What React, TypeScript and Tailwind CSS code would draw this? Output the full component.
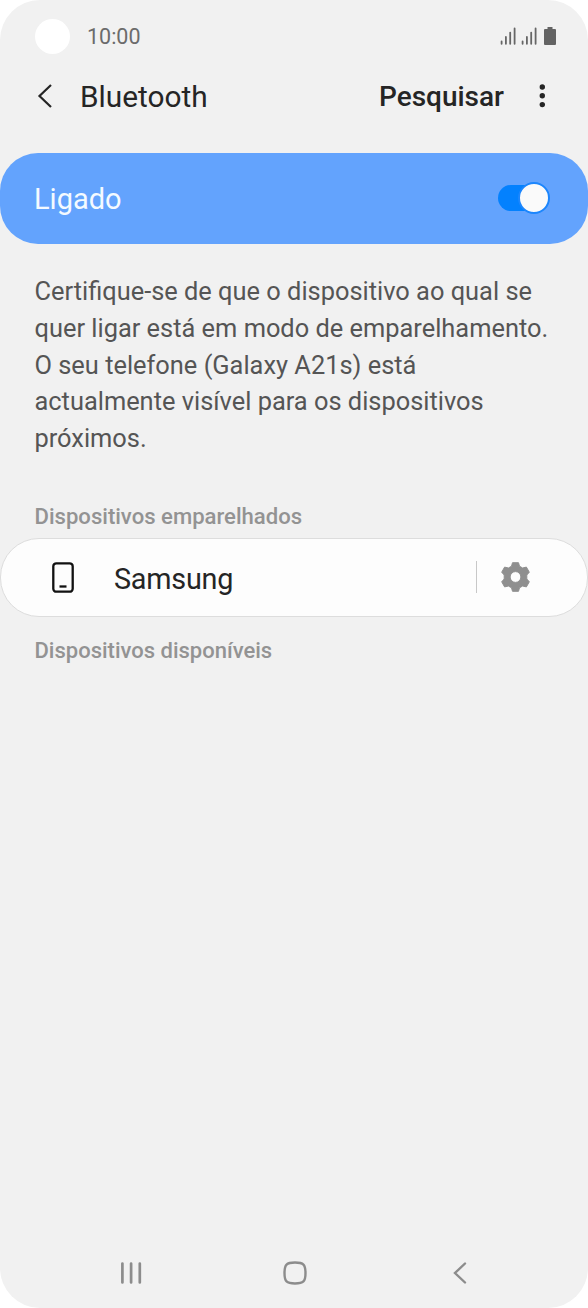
function Signal() {
  return (
    <svg width="16" height="18" viewBox="0 0 16 18" fill="none" stroke="#666666" strokeWidth="1.8" strokeLinecap="round">
      <path d="M1.6 14.5V16.8M5.9 10V16.8M10.2 5.6V16.8M14.6 1.4V16.8" />
    </svg>
  );
}

function StatusBar() {
  return (
    <div className="flex h-[72px] items-center pl-[35px] pr-[32px]">
      <div className="size-[35px] rounded-full bg-white" />
      <span className="ml-[17px] mt-[2px] text-[21.5px] leading-none text-[#6b6b6b]">10:00</span>

      <div className="ml-auto flex items-center gap-[5px]">
        <Signal />
        <Signal />
        <svg className="ml-[2px]" width="12" height="18" viewBox="0 0 12 18" fill="#636363">
          <path d="M3.5 0h5v2H11a1 1 0 0 1 1 1v14a1 1 0 0 1-1 1H1a1 1 0 0 1-1-1V3a1 1 0 0 1 1-1h2.5z" />
        </svg>
      </div>
    </div>
  );
}

function Header() {
  return (
    <div className="flex h-[48px] items-center pl-[37px] pr-[42px] text-[#252525]">
      <svg width="16" height="24" viewBox="0 0 16 24" fill="none" stroke="currentColor" strokeWidth="2.2">
        <path d="M14 1L2.5 12L14 23" />
      </svg>
      <h1 className="ml-[27px] mt-[2px] text-[29.8px] leading-none">Bluetooth</h1>
      <span className="ml-auto mt-[2px] text-[28px] font-medium leading-none">Pesquisar</span>
      <svg className="ml-[34px]" width="8" height="24" viewBox="0 0 8 24" fill="currentColor">
        <circle cx="4.3" cy="3" r="2.7" />
        <circle cx="4.3" cy="11.8" r="2.7" />
        <circle cx="4.3" cy="20.6" r="2.7" />
      </svg>
    </div>
  );
}

function Toggle() {
  return (
    <div className="relative mr-[38px] h-[32px] w-[52px]">
      <div className="absolute left-0 top-[2px] h-[26px] w-[46px] rounded-full bg-[#0381fe]" />
      <div className="absolute right-0 -top-px size-[32px] rounded-full border-2 border-[#1c86fd] bg-[#fafafa]" />
    </div>
  );
}

function Gear() {
  return (
    <svg className="ml-[24px]" width="29" height="30" viewBox="0 0 29 30" fill="#8f8f8f" stroke="#8f8f8f" strokeLinejoin="round">
      <path
        fillRule="evenodd"
        d="M11.5 0.7H17.5L18.5 4.2L21.6 6L25.4 5.1L28.3 10.2L25.8 13V17L28.3 19.8L25.4 24.9L21.6 24L18.5 25.8L17.5 29.3H11.5L10.5 25.8L7.4 24L3.6 24.9L0.7 19.8L3.2 17V13L0.7 10.2L3.6 5.1L7.4 6L10.5 4.2ZM14.5 9.6A5.4 5.4 0 1 0 14.5 20.4A5.4 5.4 0 1 0 14.5 9.6Z"
      />
    </svg>
  );
}

function NavBar() {
  return (
    <div className="mt-auto flex h-[70px] items-center justify-between pl-[120px] pr-[120px] text-[#8c8c8c]">
      <svg width="22" height="24" viewBox="0 0 22 24" fill="none" stroke="currentColor" strokeWidth="2.7" strokeLinecap="round">
        <path d="M2.4 2.5V21.5M11.1 2.5V21.5M19.8 2.5V21.5" />
      </svg>
      <svg className="-ml-[4px]" width="24" height="24" viewBox="0 0 24 24" fill="none" stroke="currentColor" strokeWidth="2.4">
        <path d="M12 1.5C20.5 1.5 22.5 3.5 22.5 12S20.5 22.5 12 22.5S1.5 20.5 1.5 12S3.5 1.5 12 1.5Z" />
      </svg>
      <svg width="16" height="24" viewBox="0 0 16 24" fill="none" stroke="currentColor" strokeWidth="2.4" strokeLinecap="round">
        <path d="M13 2.5L3 12L13 21.5" />
      </svg>
    </div>
  );
}

export default function App() {
  return (
    <div className="min-h-screen bg-white">
      <div className="flex h-[1308px] w-[588px] flex-col overflow-hidden rounded-[40px] bg-[#f1f1f1] font-['Roboto',sans-serif]">
        <StatusBar />
        <Header />

        {/* Bluetooth switch */}
        <div className="mt-[33px] flex h-[91px] items-center justify-between rounded-[38px] bg-[#63a3fd] pl-[34px]">
          <span className="mt-[2px] text-[29px] leading-none text-[#f4faff]">Ligado</span>
          <Toggle />
        </div>

        <p className="mt-[29px] whitespace-nowrap pl-[34.5px] text-[25.4px] leading-[36.8px] text-[#555555]">
          Certifique-se de que o dispositivo ao qual se<br />
          quer ligar está em modo de emparelhamento.<br />
          O seu telefone (Galaxy A21s) está<br />
          actualmente visível para os dispositivos<br />
          próximos.
        </p>

        <h2 className="mt-[47px] pl-[34.5px] text-[22.1px] font-medium leading-[24px] text-[#939393]">
          Dispositivos emparelhados
        </h2>

        {/* Paired device */}
        <div className="mt-[10px] flex h-[79px] items-center rounded-[39px] border border-[#dddddd] bg-[#fdfdfd] pl-[51px] pr-[57px]">
          <svg width="22" height="31" viewBox="0 0 22 31" fill="none" stroke="#111111" strokeWidth="2.3">
            <rect x="1.3" y="1.3" width="19.4" height="28.4" rx="3" />
            <path d="M7.5 24.5H14.5" />
          </svg>
          <span className="ml-[40px] mt-[4px] text-[28.8px] leading-none tracking-[-0.25px] text-[#252525]">Samsung</span>
          <div className="ml-auto h-[32px] w-[1.5px] bg-[#c8c8c8]" />
          <Gear />
        </div>

        <h2 className="mt-[22px] pl-[34.5px] text-[22px] font-medium leading-[24px] text-[#939393]">
          Dispositivos disponíveis
        </h2>

        <NavBar />
      </div>
    </div>
  );
}
